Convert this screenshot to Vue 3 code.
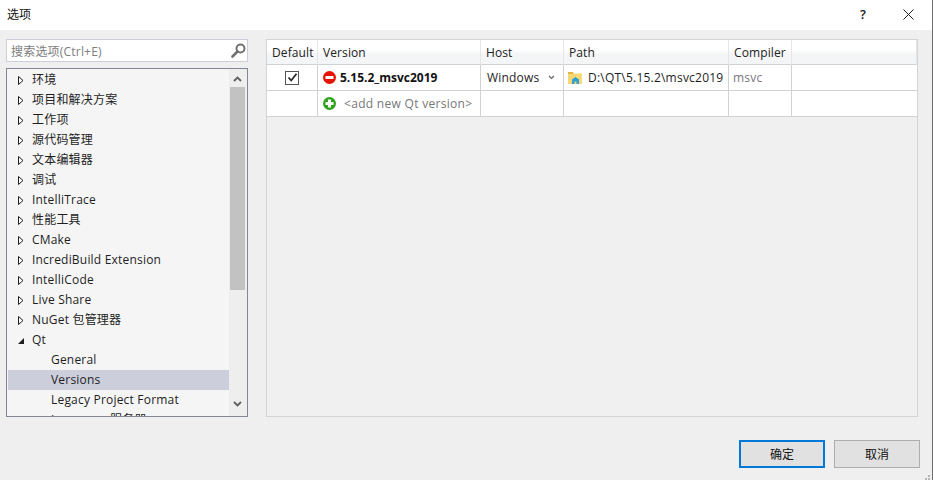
<script setup>
const items = [
  { label: '环境', arrow: 'closed' },
  { label: '项目和解决方案', arrow: 'closed' },
  { label: '工作项', arrow: 'closed' },
  { label: '源代码管理', arrow: 'closed' },
  { label: '文本编辑器', arrow: 'closed' },
  { label: '调试', arrow: 'closed' },
  { label: 'IntelliTrace', arrow: 'closed' },
  { label: '性能工具', arrow: 'closed' },
  { label: 'CMake', arrow: 'closed' },
  { label: 'IncrediBuild Extension', arrow: 'closed' },
  { label: 'IntelliCode', arrow: 'closed' },
  { label: 'Live Share', arrow: 'closed' },
  { label: 'NuGet 包管理器', arrow: 'closed' },
  { label: 'Qt', arrow: 'open' },
  { label: 'General', child: true },
  { label: 'Versions', child: true, selected: true },
  { label: 'Legacy Project Format', child: true },
  { label: 'Language 服务器', child: true },
]
const headers = ['Default', 'Version', 'Host', 'Path', 'Compiler', '']
</script>

<template>
  <div class="dialog">
    <header class="titlebar">
      <span class="title">选项</span>
      <span class="help">?</span>
      <svg class="close" width="11" height="11" viewBox="0 0 11 11"><path d="M.5.5l10 10M10.500.5l-10 10" stroke="#1a1a1a" fill="none"/></svg>
    </header>

    <main class="content">
      <aside class="side">
        <div class="search">
          <span class="placeholder">搜索选项(Ctrl+E)</span>
          <svg class="lens" width="15" height="15" viewBox="0 0 15 15">
            <circle cx="9.500" cy="5.500" r="4" fill="none" stroke="#717171" stroke-width="2"/>
            <path d="M6.500 8.500L1.500 13.500" stroke="#717171" stroke-width="2.600" stroke-linecap="round"/>
          </svg>
        </div>
        <div class="tree">
          <div class="tree-list">
            <div v-for="item in items" :key="item.label" class="tree-row" :class="{ selected: item.selected, child: item.child }">
              <svg v-if="item.arrow === 'closed'" class="arrow" width="6" height="9" viewBox="0 0 6 9"><path d="M.5.500L5 4.500L.5 8.500Z" fill="#fff" stroke="#1e1e1e"/></svg>
              <svg v-else-if="item.arrow === 'open'" class="arrow" width="6" height="9" viewBox="0 0 6 9"><path d="M6 2V8H0Z" fill="#1e1e1e"/></svg>
              <span class="row-label">{{ item.label }}</span>
            </div>
          </div>
          <div class="scrollbar">
            <svg class="sb-arrow" width="9" height="6" viewBox="0 0 9 6"><path d="M1 5L4.500 1.500L8 5" fill="none" stroke="#606060" stroke-width="1.800"/></svg>
            <div class="thumb"></div>
            <svg class="sb-arrow down" width="9" height="6" viewBox="0 0 9 6"><path d="M1 1L4.500 4.500L8 1" fill="none" stroke="#606060" stroke-width="1.800"/></svg>
          </div>
        </div>
      </aside>

      <section class="table">
        <div class="grid">
          <div v-for="(h, i) in headers" :key="i" class="head">{{ h }}</div>

          <div class="cell center">
            <span class="check">
              <svg width="11" height="11" viewBox="0 0 11 11"><path d="M1.500 5.500L4.200 8.500L9.500 1.800" fill="none" stroke="#222" stroke-width="1.700"/></svg>
            </span>
          </div>
          <div class="cell version">
            <svg width="13" height="13" viewBox="0 0 13 13"><circle cx="6.500" cy="6.500" r="6.500" fill="#e51400"/><rect x="2.500" y="5" width="8" height="3" fill="#fff"/></svg>
            <b>5.15.2_msvc2019</b>
          </div>
          <div class="cell host">
            <span>Windows</span>
            <svg width="7" height="5" viewBox="0 0 7 5"><path d="M1 1L3.500 3.500L6 1" fill="none" stroke="#666" stroke-width="1.200"/></svg>
          </div>
          <div class="cell path">
            <svg width="14" height="14" viewBox="0 0 14 14">
              <path d="M0 1H5L6 2.500H14V13H0Z" fill="#f8d775"/>
              <path d="M0 1H5V3H0Z" fill="#e3b440"/>
              <path d="M4 13V8.500L7.500 6L11 8.500V13H8.500V10.500H6.500V13Z" fill="#2a9fd8"/>
            </svg>
            <span>D:\QT\5.15.2\msvc2019</span>
          </div>
          <div class="cell muted">msvc</div>
          <div class="cell"></div>

          <div class="cell"></div>
          <div class="cell version add">
            <svg width="13" height="13" viewBox="0 0 13 13"><circle cx="6.500" cy="6.500" r="6.500" fill="#2ea31d"/><path d="M5 2.500H8V5H10.500V8H8V10.500H5V8H2.500V5H5Z" fill="#fff"/></svg>
            <span>&lt;add new Qt version&gt;</span>
          </div>
          <div class="cell"></div>
          <div class="cell"></div>
          <div class="cell"></div>
          <div class="cell"></div>
        </div>
      </section>
    </main>

    <footer class="footer">
      <button class="btn primary">确定</button>
      <button class="btn">取消</button>
      <svg class="grip" width="5" height="5" viewBox="0 0 5 5" fill="#b5b5b5">
        <rect x="3" y="0" width="2" height="2"/><rect x="3" y="3" width="2" height="2"/><rect x="0" y="3" width="2" height="2"/>
      </svg>
    </footer>
  </div>
</template>

<style scoped>
.dialog {
  width: 933px;
  height: 480px;
  box-sizing: border-box;
  border-right: 1px solid #6e6e6e;
  background: #efeff0;
  display: flex;
  flex-direction: column;
  font-family: "Open Sans", "Noto Sans CJK SC", sans-serif;
  font-size: 12px;
  color: #1e1e1e;
  overflow: hidden;
}
.titlebar {
  height: 30px;
  flex: none;
  background: #fff;
  display: flex;
  align-items: center;
  padding: 0 18px 0 7px;
}
.title { font-size: 12px; flex: 1; color: #111; padding-bottom: 2px; }
.help { font-size: 13px; color: #222; margin-right: 37px; font-weight: 600; padding-bottom: 2px; }
.close { margin-bottom: 2px; }
.content {
  height: 378px;
  flex: none;
  margin-top: 9px;
  padding: 0 14px 0 6px;
  display: flex;
  gap: 18px;
}
.side {
  width: 242px;
  flex: none;
  display: flex;
  flex-direction: column;
  gap: 6px;
}
.search {
  height: 23px;
  box-sizing: border-box;
  flex: none;
  background: #fff;
  border: 1px solid #cccedb;
  display: flex;
  align-items: center;
  justify-content: space-between;
  padding: 0 1px 0 4px;
}
.placeholder { color: #7d7d7d; letter-spacing: .2px; }
.tree {
  flex: 1;
  min-height: 0;
  border: 1px solid #828790;
  background: #f5f5f5;
  display: flex;
  padding: 1px 0 0 1px;
  overflow: hidden;
}
.tree-list {
  flex: 1;
  min-width: 0;
  overflow: hidden;
}
.tree-row {
  height: 20px;
  display: flex;
  align-items: center;
  padding-left: 10px;
  white-space: nowrap;
  letter-spacing: .2px;
}
.row-label { padding-bottom: 2px; }
.tree-row .arrow { margin-right: 8px; flex: none; }
.tree-row.child { padding-left: 43px; }
.tree-row.selected { background: #cccedb; }
.scrollbar {
  width: 18px;
  flex: none;
  background: #eeeeef;
  display: flex;
  flex-direction: column;
  align-items: center;
  margin-top: -1px;
  padding-right: 2px;
  box-sizing: border-box;
}
.sb-arrow { flex: none; margin-top: 7px; }
.thumb { width: 15px; height: 203px; margin-top: 5px; background: #c2c2c2; }
.sb-arrow.down { margin-top: auto; margin-bottom: 9px; }
.table {
  width: 652px;
  flex: none;
  box-sizing: border-box;
  border: 1px solid #d4d4d4;
  background: #f0f0f0;
}
.grid {
  display: grid;
  grid-template-columns: 51px 163px 83px 165px 63px 1fr;
  grid-template-rows: 25px 26px 26px;
}
.head {
  background: linear-gradient(#ffffff 0 40%, #f4f5f6 60%, #f4f5f6);
  border-right: 1px solid #e6e6e6;
  border-bottom: 1px solid #d2d2d2;
  padding-left: 5px;
  display: flex;
  align-items: center;
  color: #222;
  box-sizing: border-box;
  letter-spacing: .1px;
}
.cell {
  background: #fff;
  border-right: 1px solid #d2d2d2;
  border-bottom: 1px solid #d2d2d2;
  display: flex;
  align-items: center;
  padding-left: 5px;
  box-sizing: border-box;
  min-width: 0;
}
.cell:last-child, .cell:nth-child(6n) { border-right: none; }
.center { justify-content: center; padding-left: 0; }
.check {
  width: 14px;
  height: 14px;
  box-sizing: border-box;
  border: 1px solid #555;
  background: #fff;
  display: flex;
  align-items: center;
  justify-content: center;
}
.version { gap: 4px; }
.version b { font-weight: 700; color: #111; font-size: 12px; }
.add span { color: #777; margin-left: 4px; letter-spacing: .3px; }
.host { justify-content: space-between; padding: 0 8px 0 6px; letter-spacing: .2px; }
.path { gap: 6px; padding-left: 4px; white-space: nowrap; letter-spacing: .22px; }
.muted { color: #7b7583; padding-left: 4px; letter-spacing: .2px; }
.footer {
  flex: 1;
  position: relative;
  display: flex;
  align-items: flex-start;
  padding: 23px 12px 0 739px;
  gap: 9px;
}
.btn {
  width: 86px;
  height: 28px;
  flex: none;
  background: #e1e1e1;
  border: 1px solid #adadad;
  font: inherit;
  color: #111;
  padding: 0;
}
.btn.primary { border: 2px solid #0078d7; }
.grip { position: absolute; right: 2px; bottom: 0; }
</style>
